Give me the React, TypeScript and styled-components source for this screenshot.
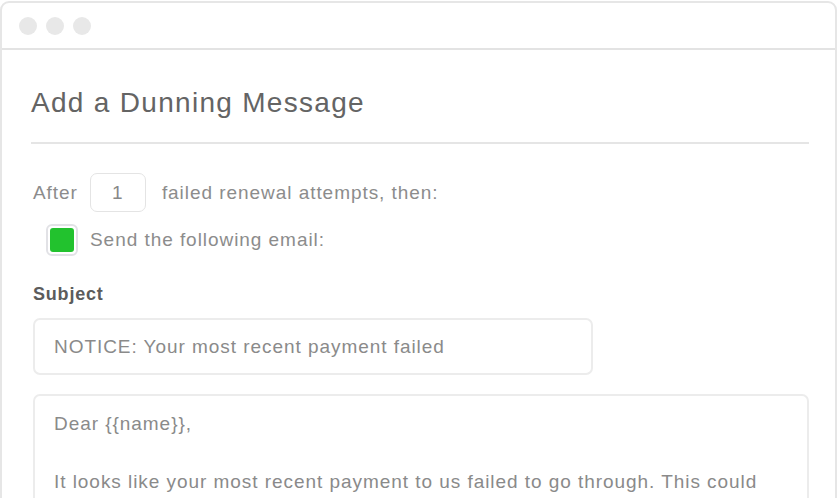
import React from "react";
import styled, { createGlobalStyle } from "styled-components";

const GlobalStyle = createGlobalStyle`
  html, body {
    margin: 0;
    padding: 0;
    background: #ffffff;
    overflow: hidden;
  }
  body {
    font-family: "Liberation Sans", Arial, sans-serif;
  }
`;

const Window = styled.div`
  box-sizing: border-box;
  width: 837px;
  height: 560px;
  margin-top: 1px;
  border: 2px solid #e6e6e6;
  border-radius: 9px;
  background: #fff;
  overflow: hidden;
`;

const TitleBar = styled.div`
  height: 45px;
  display: flex;
  align-items: center;
  gap: 9px;
  padding-left: 17px;
  border-bottom: 2px solid #e3e3e3;
`;

const Dot = styled.span`
  width: 18px;
  height: 18px;
  border-radius: 50%;
  background: #e8e8e8;
`;

const Body = styled.div`
  padding: 38px 26px 0 29px;
`;

const Heading = styled.h1`
  margin: 0;
  font-size: 28px;
  font-weight: 400;
  letter-spacing: 1.3px;
  color: #646464;
  line-height: 30px;
  padding-bottom: 24px;
  border-bottom: 2px solid #e5e5e5;
`;

const Row = styled.div`
  display: flex;
  align-items: center;
  font-size: 19px;
  color: #8c8c8c;
  letter-spacing: 0.95px;
`;

const AttemptRow = styled(Row)`
  margin-top: 29px;
  padding-left: 2px;
`;

const NumberBox = styled.div`
  box-sizing: border-box;
  width: 56px;
  height: 39px;
  margin: 0 16px 0 12px;
  border: 1px solid #e4e4e4;
  border-radius: 7px;
  display: flex;
  align-items: center;
  justify-content: center;
  color: #888;
`;

const CheckRow = styled(Row)`
  margin-top: 12px;
  padding-left: 15px;
`;

const Check = styled.div`
  box-sizing: border-box;
  width: 32px;
  height: 32px;
  margin-right: 12px;
  border: 2px solid #e2e2e6;
  border-radius: 6px;
  padding: 2px;
  display: flex;
`;

const CheckFill = styled.div`
  flex: 1;
  background: #22c22e;
  border-radius: 3px;
`;

const Label = styled.div`
  margin-top: 28px;
  padding-left: 2px;
  font-size: 18px;
  line-height: 20px;
  font-weight: 700;
  letter-spacing: 0.8px;
  color: #5c5c5c;
`;

const Field = styled.div<{ $width?: string }>`
  box-sizing: border-box;
  width: ${(p) => p.$width ?? "100%"};
  margin-left: 2px;
  border: 2px solid #ececec;
  border-radius: 7px;
  padding: 0 19px;
  font-size: 19px;
  color: #8a8a8a;
  letter-spacing: 0.95px;
`;

const SubjectField = styled(Field)`
  margin-top: 14px;
  height: 57px;
  display: flex;
  align-items: center;
`;

const MessageField = styled(Field)`
  margin-top: 19px;
  padding-top: 13px;
  padding-right: 40px;
  line-height: 29px;
  height: 200px;
`;

const Para = styled.p`
  margin: 0 0 29px 0;
`;

export default function App() {
  return (
    <>
      <GlobalStyle />
      <Window>
        <TitleBar>
          <Dot />
          <Dot />
          <Dot />
        </TitleBar>
        <Body>
          <Heading>Add a Dunning Message</Heading>
          <AttemptRow>
            After
            <NumberBox>1</NumberBox>
            failed renewal attempts, then:
          </AttemptRow>
          <CheckRow>
            <Check>
              <CheckFill />
            </Check>
            Send the following email:
          </CheckRow>
          <Label>Subject</Label>
          <SubjectField $width="560px">NOTICE: Your most recent payment failed</SubjectField>
          <MessageField $width="776px">
            <Para>Dear {"{{name}}"},</Para>
            <Para>
              It looks like your most recent payment to us failed to go through. This could be
              due to an expired card or insufficient funds.
            </Para>
          </MessageField>
        </Body>
      </Window>
    </>
  );
}
